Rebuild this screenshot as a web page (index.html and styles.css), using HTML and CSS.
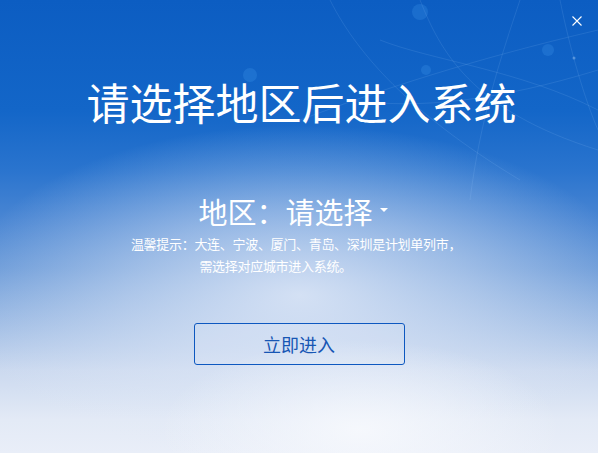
FILE: index.html
```html
<!DOCTYPE html>
<html lang="zh-CN">
<head>
<meta charset="utf-8">
<title>选择地区</title>
<link rel="stylesheet" href="styles.css">
</head>
<body>
<div class="window">
  <svg class="deco" width="598" height="260" viewBox="0 0 598 260" aria-hidden="true">
    <g fill="none" stroke="rgba(170,215,255,0.12)" stroke-width="1">
      <path d="M300 120 C 380 90, 470 60, 598 30"/>
      <path d="M330 0 C 360 60, 420 120, 520 180"/>
      <path d="M420 0 C 440 50, 470 110, 598 150"/>
      <path d="M350 100 C 420 110, 500 100, 598 70"/>
      <path d="M520 0 C 500 60, 480 120, 470 200"/>
      <path d="M380 40 C 430 60, 520 70, 598 110"/>
      <path d="M560 0 C 570 50, 585 100, 598 130"/>
    </g>
    <g fill="rgba(90,180,255,0.18)">
      <circle cx="420" cy="12" r="8"/>
      <circle cx="548" cy="50" r="6"/>
      <circle cx="426" cy="70" r="5"/>
      <circle cx="250" cy="75" r="7"/>
    </g>
    <circle cx="574" cy="58" r="1.5" fill="rgba(200,230,255,0.35)"/>
  </svg>
  <button class="close" aria-label="关闭">
    <svg width="10" height="10" viewBox="0 0 10 10"><path d="M0.5 0.5 L9.5 9.5 M9.5 0.5 L0.5 9.5" stroke="#fff" stroke-width="1.1" fill="none"/></svg>
  </button>
  <h1 class="title">请选择地区后进入系统</h1>
  <div class="region">
    <span class="region-label">地区：</span>
    <span class="region-select">请选择<span class="caret"></span></span>
  </div>
  <div class="tip">
    <span class="tip-label">温馨提示：</span>
    <span class="tip-body">
      <span class="tip-line">大连、宁波、厦门、青岛、深圳是计划单列市，</span>
      <span class="tip-line tip-line-2">需选择对应城市进入系统。</span>
    </span>
  </div>
  <button class="enter">立即进入</button>
</div>
</body>
</html>
```
FILE: styles.css
```css
html, body {
  margin: 0;
  padding: 0;
}
body {
  width: 598px;
  height: 453px;
  overflow: hidden;
  font-family: "Noto Sans CJK SC", "Microsoft YaHei", sans-serif;
}
.window {
  position: relative;
  width: 598px;
  height: 453px;
  box-sizing: border-box;
  padding-top: 79px;
  display: flex;
  flex-direction: column;
  align-items: center;
  overflow: hidden;
  background:
    radial-gradient(ellipse 200px 90px at 360px 430px, rgba(247,249,253,0.9), rgba(247,249,253,0) 100%),
    radial-gradient(ellipse 340px 170px at 300px 295px, rgba(226,234,248,0.85) 0%, rgba(226,234,248,0.45) 50%, rgba(226,234,248,0) 100%),
    linear-gradient(180deg, #0c5dc2 0px, #1366c8 110px, #2a74ce 170px, #4a86d3 220px, #6a9ad8 270px, #9ab9e3 320px, #cbd9ef 370px, #e3eaf6 420px, #e9eef8 453px);
}
.deco {
  position: absolute;
  top: 0;
  left: 0;
  pointer-events: none;
}
.close {
  position: absolute;
  top: 15px;
  left: 571px;
  width: 11px;
  height: 11px;
  padding: 0;
  border: 0;
  background: none;
  line-height: 0;
  cursor: pointer;
}
.title {
  position: relative;
  margin: 0;
  font-size: 43px;
  line-height: 44px;
  font-weight: 400;
  color: #ffffff;
  padding-left: 5px;
}
.region {
  position: relative;
  margin-top: 73px;
  display: flex;
  align-items: center;
  font-size: 29px;
  line-height: 30px;
  color: #ffffff;
  padding-right: 12px;
}
.region-select {
  display: flex;
  align-items: center;
}
.caret {
  width: 0;
  height: 0;
  margin-left: 7px;
  margin-top: -2px;
  border-left: 4px solid transparent;
  border-right: 4px solid transparent;
  border-top: 4px solid #ffffff;
}
.tip {
  position: relative;
  margin-top: 7px;
  display: flex;
  font-size: 13px;
  line-height: 22px;
  letter-spacing: -0.3px;
  color: #ffffff;
  padding-right: 6px;
}
.tip-label {
  flex: none;
}
.tip-body {
  display: flex;
  flex-direction: column;
}
.tip-line-2 {
  padding-left: 5px;
}
.enter {
  position: relative;
  margin-top: 46px;
  width: 211px;
  height: 42px;
  box-sizing: border-box;
  border: 1px solid #0d58c0;
  border-radius: 3px;
  background: rgba(255,255,255,0.08);
  color: #1756b4;
  font-family: "Noto Sans CJK SC", "Microsoft YaHei", sans-serif;
  font-size: 18px;
  padding: 0;
  cursor: pointer;
}
```
